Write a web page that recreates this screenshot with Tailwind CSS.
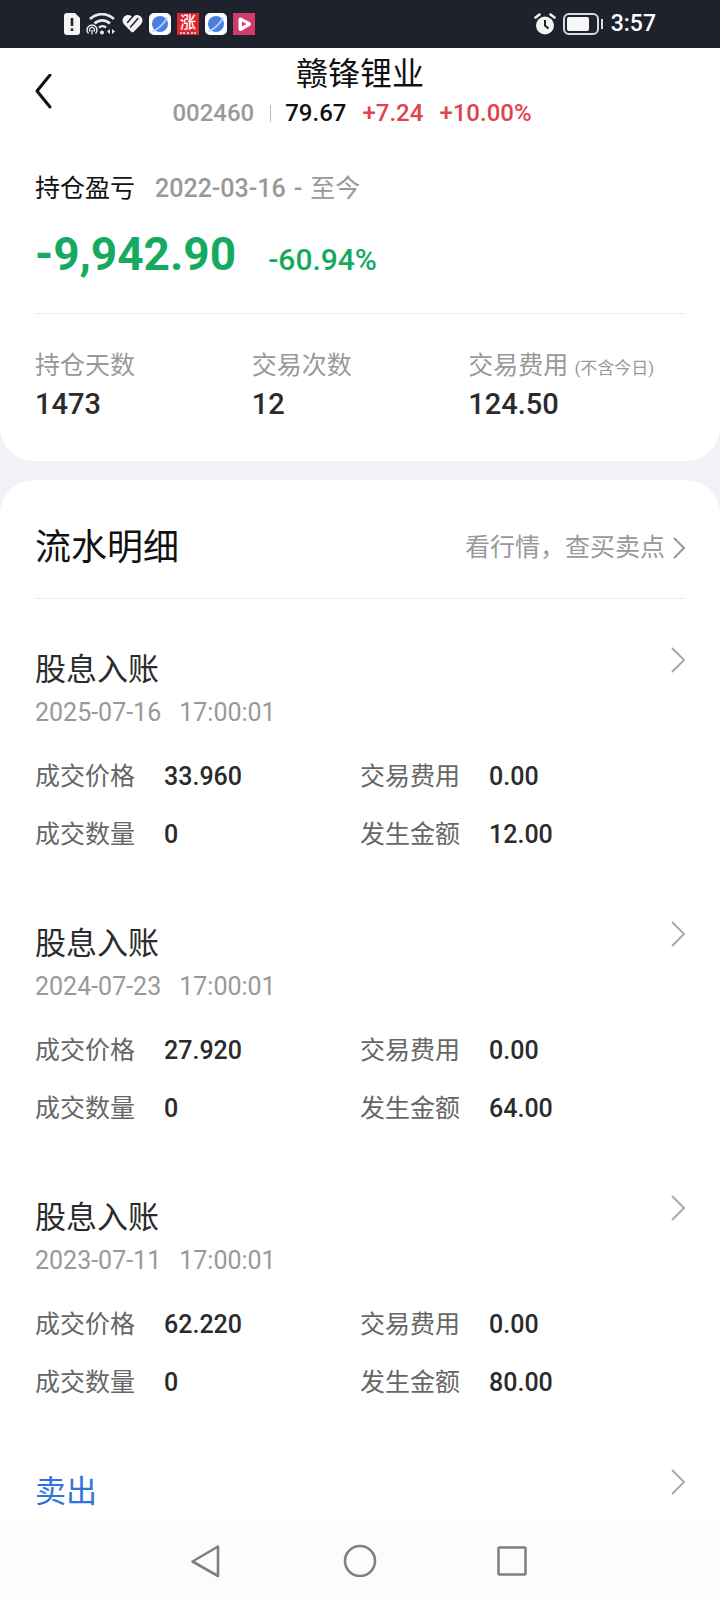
<!DOCTYPE html>
<html lang="zh-CN">
<head>
    <meta charset="UTF-8">
    <meta name="viewport" content="width=device-width, initial-scale=1.0">
    <title>赣锋锂业 持仓盈亏</title>
    <script src="https://cdn.jsdelivr.net/npm/@tailwindcss/browser@4"></script>
</head>
<body class="flex min-h-screen flex-col bg-[#f1f2f6] font-[Roboto,'Noto_Sans_CJK_SC',sans-serif] text-[25px] text-[#2b2b2b]">

    <!-- Status bar -->
    <div class="flex h-12 shrink-0 items-center justify-between bg-[#1e222d] px-16 text-white">
        <div class="flex items-center gap-[6px]">
            <svg class="h-[22px] w-4" viewBox="0 0 16 22" fill="none">
                <path d="M3 0h8l5 5v14a3 3 0 0 1-3 3H3a3 3 0 0 1-3-3V3a3 3 0 0 1 3-3z" fill="#f4f4f4"/>
                <path d="M8 5v8M8 15.500v2.500" stroke="#1e222d" stroke-width="2.600"/>
            </svg>
            <svg class="h-[22px] w-[30px]" viewBox="0 0 30 22" fill="none" stroke="#e8e8e8">
                <path d="M4 6c7-6.500 17-6.500 24 0" stroke-width="2.800"/>
                <path d="M8.500 10.500c4.500-4.200 11-4.200 15.500 0" stroke-width="2.800"/>
                <path d="M13 14.500c2-1.800 5-1.800 7 0" stroke-width="2.400"/>
                <circle cx="16" cy="19.500" r="2" fill="#e8e8e8" stroke="none"/>
                <path d="M2.500 20.500a5 5 0 1 1 7 0" stroke-width="1.500"/>
                <path d="M4.300 18.500a2.400 2.400 0 1 1 3.400 0M6 17v4.500" stroke-width="1.300"/>
                <path d="M24 16v5l-3-2.500zM26 16v5l3-2.500z" fill="#e8e8e8" stroke="none"/>
            </svg>
            <svg class="h-[22px] w-[21px]" viewBox="0 0 21 22" fill="none">
                <path d="M10.500 4C8.500 1.500 4.500 1.300 2.200 3.600c-2.300 2.400-2.100 5.700 0 7.900l7 7.200c.8.800 1.800.8 2.600 0l7-7.200c2.100-2.200 2.300-5.500 0-7.900C16.500 1.300 12.500 1.500 10.500 4z" fill="#f4f4f4"/>
                <path d="M12 2L5.500 9.500M16 5.500L8.500 14" stroke="#1e222d" stroke-width="1.500" stroke-linecap="round"/>
            </svg>
            <svg class="h-[22px] w-[22px]" viewBox="0 0 22 22">
                <rect width="22" height="22" rx="5" fill="#fff"/>
                <circle cx="11" cy="11" r="8" fill="#4a7fe0"/>
                <path d="M3.500 18.500c5-2 11-7.500 15-14" stroke="#b5d6ff" stroke-width="1.600" fill="none"/>
            </svg>
            <span class="flex h-[22px] w-[22px] flex-col items-center justify-center gap-px bg-[#dd2631]">
                <span class="text-[16px] leading-4 font-medium">涨</span>
                <span class="w-4 border-b-2 border-dotted border-white/70"></span>
            </span>
            <svg class="h-[22px] w-[22px]" viewBox="0 0 22 22">
                <rect width="22" height="22" rx="5" fill="#fff"/>
                <circle cx="11" cy="11" r="8" fill="#4a7fe0"/>
                <path d="M3.500 18.500c5-2 11-7.500 15-14" stroke="#b5d6ff" stroke-width="1.600" fill="none"/>
            </svg>
            <svg class="h-[22px] w-[22px]" viewBox="0 0 22 22">
                <rect width="22" height="22" fill="#cf3c6c"/>
                <path d="M7.500 6.500l8.500 4.500-8.500 5z" fill="#fff" stroke="#fff" stroke-width="4" stroke-linejoin="round"/>
                <path d="M9 8.500l4.500 2.500L9 13.500z" fill="#cf3c6c"/>
            </svg>
        </div>
        <div class="flex items-center gap-[7px]">
            <svg class="h-[22px] w-[22px]" viewBox="0 0 22 22" fill="none">
                <circle cx="11" cy="12.500" r="9" fill="#f4f4f4"/>
                <path d="M1.500 4.500L5.500 1.500M16.500 1.500l4 3" stroke="#f4f4f4" stroke-width="2.600" stroke-linecap="round"/>
                <path d="M11 7v5.500l3.500 3" stroke="#1e222d" stroke-width="2"/>
            </svg>
            <svg class="h-[22px] w-[41px]" viewBox="0 0 41 22" fill="none">
                <rect x="1" y="1" width="34" height="20" rx="5" stroke="#d8dbe2" stroke-width="2"/>
                <rect x="4" y="4" width="22" height="14" rx="2" fill="#f8f8f8"/>
                <rect x="38" y="6" width="2" height="10" fill="#d8dbe2"/>
            </svg>
            <span class="text-[23px] font-medium">3:57</span>
        </div>
    </div>

    <!-- Summary card -->
    <section class="rounded-b-[34px] bg-white pb-[35px]">
        <header class="grid grid-cols-[1fr_auto_1fr] items-center px-[34px] pt-[6px]">
            <button type="button" aria-label="返回" class="h-[36px] w-[18px]">
                <svg class="h-[36px] w-[18px]" viewBox="0 0 18 36" fill="none" stroke="#111" stroke-width="3" stroke-linecap="round" stroke-linejoin="round">
                    <path d="M16 1L3 17l13 16"/>
                </svg>
            </button>
            <div class="flex flex-col items-center gap-[3px]">
                <h1 class="text-[32px] leading-10 text-[#111]">赣锋锂业</h1>
                <div class="flex items-center pr-4 text-[24px] leading-8 font-medium">
                    <span class="text-[#999]">002460</span>
                    <span class="mr-[14px] ml-4 h-[17px] w-px bg-[#bbb]"></span>
                    <span class="text-[#111]">79.67</span>
                    <span class="ml-4 text-[#e0434c]">+7.24</span>
                    <span class="ml-4 text-[#e0434c]">+10.00%</span>
                </div>
            </div>
        </header>

        <div class="px-[35px] pt-10">
            <div class="flex gap-5 leading-10">
                <h2 class="text-[#111]">持仓盈亏</h2>
                <p class="flex gap-2 text-[#999]"><span class="font-medium">2022-03-16</span><span class="font-medium">-</span><span>至今</span></p>
            </div>
            <div class="mt-[13px] flex items-baseline gap-8 border-b border-[#ececec] pb-[21px] leading-[64px] text-[#15aa60]">
                <span class="text-[46px] font-bold">-9,942.90</span>
                <span class="text-[30px] font-medium">-60.94%</span>
            </div>
            <dl class="grid grid-cols-3 pt-9">
                <div>
                    <dt class="h-8 leading-8 text-[#999]">持仓天数</dt>
                    <dd class="text-[29px] leading-11 font-medium">1473</dd>
                </div>
                <div>
                    <dt class="h-8 leading-8 text-[#999]">交易次数</dt>
                    <dd class="text-[29px] leading-11 font-medium">12</dd>
                </div>
                <div>
                    <dt class="h-8 leading-8 whitespace-nowrap text-[#999]">交易费用 <span class="text-[17px] leading-none">(不含今日)</span></dt>
                    <dd class="text-[29px] leading-11 font-medium">124.50</dd>
                </div>
            </dl>
        </div>
    </section>

    <!-- Transactions -->
    <main class="mt-[19px] flex-1 rounded-t-[34px] bg-white px-[35px]">
        <div class="flex h-[119px] items-center justify-between border-b border-[#ececec] pt-[18px]">
            <h2 class="text-[36px] text-[#111]">流水明细</h2>
            <a href="#" class="flex items-center gap-2 text-[#999]">
                看行情，查买卖点
                <svg class="h-[22px] w-3" viewBox="0 0 12 22" fill="none" stroke="#999" stroke-width="2"><path d="M1 1l10 10L1 21"/></svg>
            </a>
        </div>

        <article class="pt-12 pb-[18px]">
            <div class="flex items-start justify-between">
                <h3 class="text-[31px] leading-[46px]">股息入账</h3>
                <a href="#" aria-label="查看详情">
                    <svg class="h-[26px] w-[14px]" viewBox="0 0 14 26" fill="none" stroke="#aaa" stroke-width="2"><path d="M1 1l12 12L1 25"/></svg>
                </a>
            </div>
            <p class="flex gap-[18px] leading-10 text-[#999]"><span>2025-07-16</span><span>17:00:01</span></p>
            <dl class="mt-6 grid grid-cols-2 gap-y-[18px] leading-10">
                <div class="flex gap-[29px]"><dt class="text-[#666]">成交价格</dt><dd class="font-medium">33.960</dd></div>
                <div class="flex gap-[29px]"><dt class="text-[#666]">交易费用</dt><dd class="font-medium">0.00</dd></div>
                <div class="flex gap-[29px]"><dt class="text-[#666]">成交数量</dt><dd class="font-medium">0</dd></div>
                <div class="flex gap-[29px]"><dt class="text-[#666]">发生金额</dt><dd class="font-medium">12.00</dd></div>
            </dl>
        </article>

        <article class="pt-12 pb-[18px]">
            <div class="flex items-start justify-between">
                <h3 class="text-[31px] leading-[46px]">股息入账</h3>
                <a href="#" aria-label="查看详情">
                    <svg class="h-[26px] w-[14px]" viewBox="0 0 14 26" fill="none" stroke="#aaa" stroke-width="2"><path d="M1 1l12 12L1 25"/></svg>
                </a>
            </div>
            <p class="flex gap-[18px] leading-10 text-[#999]"><span>2024-07-23</span><span>17:00:01</span></p>
            <dl class="mt-6 grid grid-cols-2 gap-y-[18px] leading-10">
                <div class="flex gap-[29px]"><dt class="text-[#666]">成交价格</dt><dd class="font-medium">27.920</dd></div>
                <div class="flex gap-[29px]"><dt class="text-[#666]">交易费用</dt><dd class="font-medium">0.00</dd></div>
                <div class="flex gap-[29px]"><dt class="text-[#666]">成交数量</dt><dd class="font-medium">0</dd></div>
                <div class="flex gap-[29px]"><dt class="text-[#666]">发生金额</dt><dd class="font-medium">64.00</dd></div>
            </dl>
        </article>

        <article class="pt-12 pb-[18px]">
            <div class="flex items-start justify-between">
                <h3 class="text-[31px] leading-[46px]">股息入账</h3>
                <a href="#" aria-label="查看详情">
                    <svg class="h-[26px] w-[14px]" viewBox="0 0 14 26" fill="none" stroke="#aaa" stroke-width="2"><path d="M1 1l12 12L1 25"/></svg>
                </a>
            </div>
            <p class="flex gap-[18px] leading-10 text-[#999]"><span>2023-07-11</span><span>17:00:01</span></p>
            <dl class="mt-6 grid grid-cols-2 gap-y-[18px] leading-10">
                <div class="flex gap-[29px]"><dt class="text-[#666]">成交价格</dt><dd class="font-medium">62.220</dd></div>
                <div class="flex gap-[29px]"><dt class="text-[#666]">交易费用</dt><dd class="font-medium">0.00</dd></div>
                <div class="flex gap-[29px]"><dt class="text-[#666]">成交数量</dt><dd class="font-medium">0</dd></div>
                <div class="flex gap-[29px]"><dt class="text-[#666]">发生金额</dt><dd class="font-medium">80.00</dd></div>
            </dl>
        </article>

        <article class="pt-12">
            <div class="flex items-start justify-between">
                <h3 class="text-[31px] leading-[46px] text-[#2f74e0]">卖出</h3>
                <a href="#" aria-label="查看详情">
                    <svg class="h-[26px] w-[14px]" viewBox="0 0 14 26" fill="none" stroke="#aaa" stroke-width="2"><path d="M1 1l12 12L1 25"/></svg>
                </a>
            </div>
        </article>
    </main>

    <!-- System navigation -->
    <nav class="flex h-[79px] shrink-0 items-center justify-center gap-[120px] bg-[#fcfcfc]">
        <button type="button" aria-label="后退">
            <svg class="h-[34px] w-[34px]" viewBox="0 0 34 34" fill="none" stroke="#808080" stroke-width="2.600" stroke-linejoin="round"><path d="M29 2.500v29.500L3.500 17.500z"/></svg>
        </button>
        <button type="button" aria-label="主屏幕">
            <svg class="h-[34px] w-[34px]" viewBox="0 0 34 34" fill="none" stroke="#808080" stroke-width="2.600"><circle cx="17" cy="17" r="15"/></svg>
        </button>
        <button type="button" aria-label="最近任务">
            <svg class="h-[34px] w-[34px]" viewBox="0 0 34 34" fill="none" stroke="#808080" stroke-width="2.600"><rect x="1.500" y="3.500" width="27" height="27" rx="1"/></svg>
        </button>
    </nav>
</body>
</html>
